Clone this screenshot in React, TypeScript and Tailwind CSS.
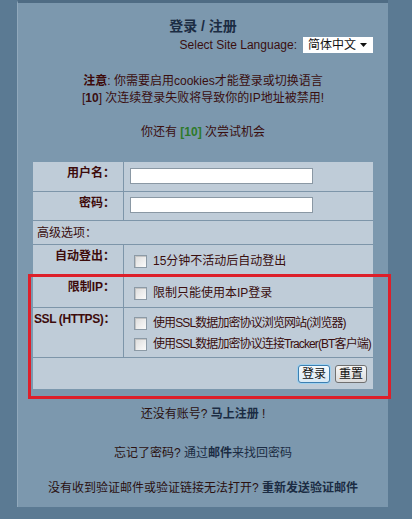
import React from 'react';

const font = { fontFamily: '"Liberation Sans", "Noto Sans CJK SC", sans-serif' };

function Box() {
  return (
    <span className="inline-block w-[13px] h-[13px] shrink-0 border border-[#8c9aa6] bg-gradient-to-br from-[#dcdcdc] to-[#fbfbfb] shadow-[inset_1px_1px_0_#c4c4c4]" />
  );
}

function Label({ children, cls = '' }: { children: React.ReactNode; cls?: string }) {
  return (
    <div className={`border-r border-[#7d95a9] pr-[8px] pt-[3px] text-right font-bold text-[#3d0b0b] whitespace-nowrap ${cls}`}>{children}</div>
  );
}

export default function App() {
  return (
    <div style={font} className="w-[412px] h-[519px] bg-[#5b7a93] text-[12px] leading-[16px] text-[#3a0e0e] overflow-hidden">
      <div className="ml-[17px] w-[371px] h-[507px] bg-[#7c98ae] border-t-[3px] border-[#4f6c84] border-l border-l-[#91a9bc] px-[15px]">
        {/* Header */}
        <div className="pt-[15px] text-center text-[14px] font-bold text-[#1b2c43]">登录 / 注册</div>
        <div className="mt-[3px] flex items-center justify-end gap-[6px]">
          <span className="text-[#3a0e0e]">Select Site Language:</span>
          <div className="flex items-center justify-between w-[70px] h-[16px] bg-white pl-[5px] pr-[6px] text-[#111]">
            <span>简体中文</span>
            <svg width="7" height="4" viewBox="0 0 7 4"><path d="M0 0h7L3.5 4z" fill="#111" /></svg>
          </div>
        </div>

        <div className="mt-[20px] text-center leading-[17px]">
          <div><b className="text-[#3d0808]">注意</b>: 你需要启用cookies才能登录或切换语言</div>
          <div>[<b>10</b>] 次连续登录失败将导致你的IP地址被禁用!</div>
        </div>
        <div className="mt-[17px] text-center">
          你还有 <b className="text-[#2e7a2a]">[10]</b> 次尝试机会
        </div>

        {/* Form table */}
        <div className="relative mt-[22px] bg-[#bfccd8] grid grid-cols-[91px_minmax(0,1fr)]">
          <Label>用户名：</Label>
          <div className="h-[29px] pl-[6px] pt-[6px]">
            <div className="w-[183px] h-[16px] bg-white border border-[#8a98a4]" />
          </div>
          <div className="col-span-2 border-t border-[#7d95a9]" />
          <Label>密码：</Label>
          <div className="h-[28px] pl-[6px] pt-[5px]">
            <div className="w-[183px] h-[16px] bg-white border border-[#8a98a4]" />
          </div>
          <div className="col-span-2 border-t border-[#7d95a9]" />
          <div className="col-span-2 h-[23px] pl-[4px] pt-[4px]">高级选项：</div>
          <div className="col-span-2 border-t border-[#7d95a9]" />
          <Label>自动登出：</Label>
          <div className="h-[29px] pl-[10px] pt-[10px] flex items-start gap-[6px]">
            <Box />
            <span className="-mt-[2px]">15分钟不活动后自动登出</span>
          </div>
          <div className="col-span-2 border-t border-[#7d95a9]" />
          <Label cls="pt-[4px]">限制IP：</Label>
          <div className="h-[32px] pl-[10px] pt-[12px] flex items-start gap-[6px]">
            <Box />
            <span className="-mt-[2px]">限制只能使用本IP登录</span>
          </div>
          <div className="col-span-2 border-t border-[#7d95a9]" />
          <Label cls="tracking-[-0.4px]">SSL (HTTPS)：</Label>
          <div className="h-[49px] pl-[10px] pt-[9px] flex flex-col gap-[7px] tracking-[-0.9px]">
            <div className="flex items-start gap-[6px]">
              <Box />
              <span className="-mt-[2px] whitespace-nowrap">使用SSL数据加密协议浏览网站(浏览器)</span>
            </div>
            <div className="flex items-start gap-[6px]">
              <Box />
              <span className="-mt-[2px] whitespace-nowrap">使用SSL数据加密协议连接Tracker(BT客户端)</span>
            </div>
          </div>
          <div className="col-span-2 border-t border-[#7d95a9]" />
          <div className="col-span-2 h-[31px] flex items-start justify-end gap-[5px] pr-[6px] pt-[7px]">
            <button className="h-[18px] px-[3px] rounded-[3px] border border-[#3c7fb1] bg-gradient-to-b from-[#f4f9fc] to-[#d9e9f4] shadow-[0_0_0_1px_#9fd0ee] text-[12px] leading-[14px] text-[#111]">登录</button>
            <button className="h-[18px] px-[3px] rounded-[3px] border border-[#707070] bg-gradient-to-b from-[#f6f6f6] to-[#dcdcdc] text-[12px] leading-[14px] text-[#111]">重置</button>
          </div>
          {/* highlight frame */}
          <div className="absolute left-[-5px] right-[-18px] top-[112px] bottom-[-10px] border-[3px] border-[#dd1f2a] pointer-events-none" />
        </div>

        {/* Links */}
        <div className="mt-[17px] text-center text-[#2a1010]">
          还没有账号? <b className="text-[#1b2c43]">马上注册</b> !
        </div>
        <div className="mt-[23px] text-center text-[#2a1010]">
          忘记了密码? <span className="text-[#1b2c43]">通过<b>邮件</b>来找回密码</span>
        </div>
        <div className="mt-[19px] text-center text-[#2a1010] whitespace-nowrap">
          没有收到验证邮件或验证链接无法打开? <b className="text-[#1b2c43]">重新发送验证邮件</b>
        </div>
      </div>
    </div>
  );
}
